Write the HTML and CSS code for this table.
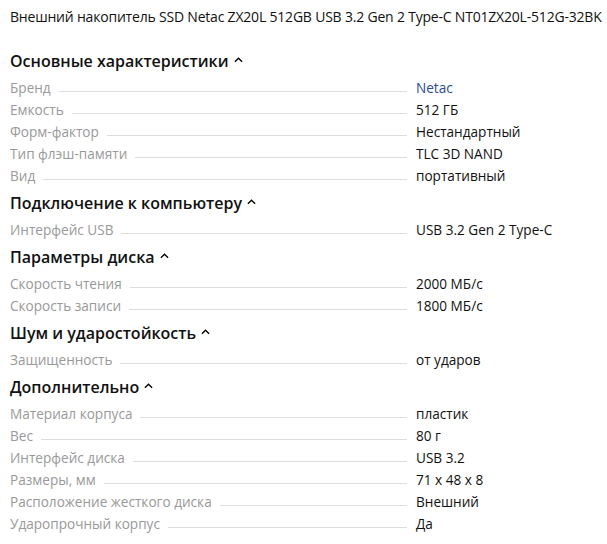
FILE: index.html
```html
<!DOCTYPE html>
<html lang="ru">
<head>
<meta charset="utf-8">
<link rel="stylesheet" href="styles.css">
</head>
<body>
<div class="page">
  <h1 class="title">Внешний накопитель SSD Netac ZX20L 512GB USB 3.2 Gen 2 Type-C NT01ZX20L-512G-32BK</h1>

  <section class="group">
    <h2 class="heading">Основные характеристики <svg class="caret" viewBox="0 0 10 6" width="9" height="6"><path d="M1 5 L5 1 L9 5" fill="none" stroke="#000" stroke-width="1.5"/></svg></h2>
    <div class="row"><span class="label">Бренд</span><span class="dots"></span><span class="value link">Netac</span></div>
    <div class="row"><span class="label">Емкость</span><span class="dots"></span><span class="value">512 ГБ</span></div>
    <div class="row"><span class="label">Форм-фактор</span><span class="dots"></span><span class="value">Нестандартный</span></div>
    <div class="row"><span class="label">Тип флэш-памяти</span><span class="dots"></span><span class="value">TLC 3D NAND</span></div>
    <div class="row"><span class="label">Вид</span><span class="dots"></span><span class="value">портативный</span></div>
  </section>

  <section class="group">
    <h2 class="heading">Подключение к компьютеру <svg class="caret" viewBox="0 0 10 6" width="9" height="6"><path d="M1 5 L5 1 L9 5" fill="none" stroke="#000" stroke-width="1.5"/></svg></h2>
    <div class="row"><span class="label">Интерфейс USB</span><span class="dots"></span><span class="value">USB 3.2 Gen 2 Type-C</span></div>
  </section>

  <section class="group">
    <h2 class="heading">Параметры диска <svg class="caret" viewBox="0 0 10 6" width="9" height="6"><path d="M1 5 L5 1 L9 5" fill="none" stroke="#000" stroke-width="1.5"/></svg></h2>
    <div class="row"><span class="label">Скорость чтения</span><span class="dots"></span><span class="value">2000 МБ/с</span></div>
    <div class="row"><span class="label">Скорость записи</span><span class="dots"></span><span class="value">1800 МБ/с</span></div>
  </section>

  <section class="group">
    <h2 class="heading">Шум и ударостойкость <svg class="caret" viewBox="0 0 10 6" width="9" height="6"><path d="M1 5 L5 1 L9 5" fill="none" stroke="#000" stroke-width="1.5"/></svg></h2>
    <div class="row"><span class="label">Защищенность</span><span class="dots"></span><span class="value">от ударов</span></div>
  </section>

  <section class="group">
    <h2 class="heading">Дополнительно <svg class="caret" viewBox="0 0 10 6" width="9" height="6"><path d="M1 5 L5 1 L9 5" fill="none" stroke="#000" stroke-width="1.5"/></svg></h2>
    <div class="row"><span class="label">Материал корпуса</span><span class="dots"></span><span class="value">пластик</span></div>
    <div class="row"><span class="label">Вес</span><span class="dots"></span><span class="value">80 г</span></div>
    <div class="row"><span class="label">Интерфейс диска</span><span class="dots"></span><span class="value">USB 3.2</span></div>
    <div class="row"><span class="label">Размеры, мм</span><span class="dots"></span><span class="value">71 x 48 x 8</span></div>
    <div class="row"><span class="label">Расположение жесткого диска</span><span class="dots"></span><span class="value">Внешний</span></div>
    <div class="row"><span class="label">Ударопрочный корпус</span><span class="dots"></span><span class="value">Да</span></div>
  </section>
</div>
</body>
</html>
```

FILE: styles.css
```css
html, body {
  margin: 0;
  padding: 0;
  background: #fff;
}
body {
  font-family: "Open Sans", "Noto Sans", sans-serif;
  color: #000;
}
.page {
  padding: 8px 0 0 10px;
}
.title {
  margin: 0 0 19px 0;
  font-size: 14px;
  font-weight: 400;
  line-height: 18px;
  letter-spacing: -0.2px;
  white-space: nowrap;
  color: #111;
}
.group {
  display: flex;
  flex-direction: column;
}
.heading {
  margin: 0;
  height: 32px;
  font-size: 16px;
  font-weight: 600;
  line-height: 20px;
  color: #111;
  display: flex;
  align-items: center;
  gap: 5px;
  padding: 3px 0 3px 0;
  box-sizing: border-box;
}
.caret {
  margin-top: -3px;
}
.row {
  display: flex;
  align-items: baseline;
  height: 22px;
  font-size: 13.6px;
  line-height: 22px;
}
.label {
  color: #999;
  white-space: nowrap;
}
.dots {
  flex: 1;
  margin: 0 9px 0 8px;
  border-bottom: 1px solid #ddd;
  position: relative;
  top: -1px;
}
.value {
  width: 191px;
  flex: none;
  color: #111;
  white-space: nowrap;
}
.link {
  color: #2a4b8d;
}
```
